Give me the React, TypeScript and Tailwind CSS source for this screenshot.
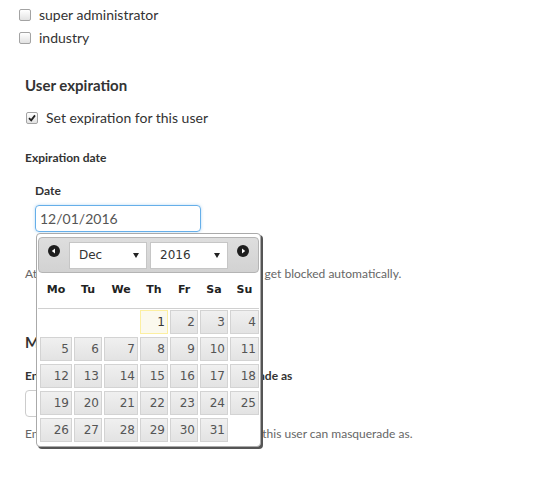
import React from 'react';

const weeks: (number | null)[][] = [
  [null, null, null, 1, 2, 3, 4],
  [5, 6, 7, 8, 9, 10, 11],
  [12, 13, 14, 15, 16, 17, 18],
  [19, 20, 21, 22, 23, 24, 25],
  [26, 27, 28, 29, 30, 31, null],
];

const dayNames = ['Mo', 'Tu', 'We', 'Th', 'Fr', 'Sa', 'Su'];

const pickerFont = { fontFamily: '"DejaVu Sans", Verdana, sans-serif' };

function CheckBox({ checked }: { checked?: boolean }) {
  return (
    <span className="flex h-[12px] w-[12px] shrink-0 items-center justify-center rounded-[2px] border border-[#a3a3a3] bg-linear-to-b from-white to-[#e2e2e2]">
      {checked && (
        <svg width="8" height="8" viewBox="0 0 8 8">
          <path d="M1 4.2 L3.2 6.4 L7 1.4" stroke="#222" strokeWidth="1.8" fill="none" />
        </svg>
      )}
    </span>
  );
}

function NavIcon({ dir }: { dir: 'prev' | 'next' }) {
  return (
    <svg width="12" height="12" viewBox="0 0 12 12">
      <circle cx="6" cy="6" r="6" fill="#1e1e1e" />
      {dir === 'prev' ? (
        <path d="M3.8 6 L7 3.6 V8.4 Z" fill="#fff" />
      ) : (
        <path d="M8.2 6 L5 3.6 V8.4 Z" fill="#fff" />
      )}
    </svg>
  );
}

function FakeSelect({ value }: { value: string }) {
  return (
    <div className="flex h-[27px] w-[78px] items-center justify-between border border-[#c6c6c6] bg-white pl-[9px] pr-[7px] text-[12px] text-[#333]">
      <span>{value}</span>
      <svg width="6" height="5" viewBox="0 0 6 5">
        <path d="M0 0 H6 L3 5 Z" fill="#222" />
      </svg>
    </div>
  );
}

function DatePicker() {
  return (
    <div
      className="absolute left-[1px] top-[28px] z-10 w-[225px] rounded-[4px] border border-[#aaa] bg-white px-[1px] pb-[4px] pt-[3px] shadow-[2px_2px_0_0_#555]"
      style={pickerFont}
    >
      <div className="flex h-[36px] items-center rounded-[4px] border border-[#b4b4b4] bg-linear-to-b from-[#dedede] to-[#d2d2d2]">
        <div className="flex w-[30px] justify-center self-start pt-[7px]">
          <NavIcon dir="prev" />
        </div>
        <FakeSelect value="Dec" />
        <div className="w-[3px]" />
        <FakeSelect value="2016" />
        <div className="flex flex-1 justify-center self-start pt-[7px]">
          <NavIcon dir="next" />
        </div>
      </div>

      <div className="border-b border-[#d0d0d0]">
        <div className="ml-[2px] grid h-[35px] grid-cols-[32px_28px_34px_28px_28px_28px_29px] items-center gap-x-[2px] text-[11px] font-bold text-[#222]">
          {dayNames.map((d) => (
            <div key={d} className="text-center">
              {d}
            </div>
          ))}
        </div>
      </div>

      <div className="ml-[2px] mt-[1px] grid grid-cols-[32px_28px_34px_28px_28px_28px_29px] gap-x-[2px] gap-y-[3px]">
        {weeks.flat().map((n, i) =>
          n === null ? (
            <div key={i} className="h-[24px]" />
          ) : n === 1 ? (
            <div
              key={i}
              className="flex h-[24px] items-center justify-end border border-[#fcefa1] bg-[#fbf9ee] pr-[2px] text-[12px] text-[#363636]"
            >
              {n}
            </div>
          ) : (
            <div
              key={i}
              className="flex h-[24px] items-center justify-end border border-[#d3d3d3] bg-linear-to-b from-[#f0f0f0] to-[#e3e3e3] pr-[2px] text-[12px] text-[#555]"
            >
              {n}
            </div>
          )
        )}
      </div>
    </div>
  );
}

export default function App() {
  return (
    <div
      className="h-[488px] w-[556px] overflow-hidden bg-white text-[#333]"
      style={{ fontFamily: 'Lato, "Open Sans", sans-serif' }}
    >
      <div className="pt-[3px]">
        <div className="flex h-[23px] items-center gap-[8px] pl-[19px] text-[14px]">
          <CheckBox />
          <span>super administrator</span>
        </div>
        <div className="flex h-[23px] items-center gap-[8px] pl-[19px] text-[14px]">
          <CheckBox />
          <span>industry</span>
        </div>
      </div>

      <div className="pl-[25px]">
        <h3 className="mt-[26px] text-[15px] font-bold leading-[20px]">User expiration</h3>

        <div className="mt-[11px] flex h-[23px] items-center gap-[8px] pl-[1px] text-[14px]">
          <CheckBox checked />
          <span>Set expiration for this user</span>
        </div>

        <div className="mt-[21px] text-[12px] font-bold leading-[16px]">Expiration date</div>

        <div className="pl-[10px]">
          <div className="mt-[17px] text-[12px] font-bold leading-[16px]">Date</div>
          <div className="relative mt-[6px] w-[166px]">
            <div className="flex h-[27px] items-center rounded-[4px] border border-[#66afe9] pl-[4px] text-[14px] text-[#555] shadow-[0_0_3px_rgba(102,175,233,0.5)]">
              12/01/2016
            </div>
            <DatePicker />
          </div>
        </div>

        <p className="mt-[34px] text-[12px] leading-[16px] text-[#666]">
          At the expiration date, the user's account will get blocked automatically.
        </p>

        <h3 className="mt-[50px] text-[15px] font-bold leading-[20px]">Masquerade</h3>

        <div className="mt-[16px] text-[12px] font-bold leading-[16px]">
          Enter the user(s) this user is able to masquerade as
        </div>
        <div className="mt-[6px] h-[27px] w-[215px] rounded-[4px] border border-[#ccc]" />
        <p className="mt-[9px] text-[12px] leading-[16px] text-[#666]">
          Enter usernames, separated by commas, that this user can masquerade as.
        </p>
      </div>
    </div>
  );
}
